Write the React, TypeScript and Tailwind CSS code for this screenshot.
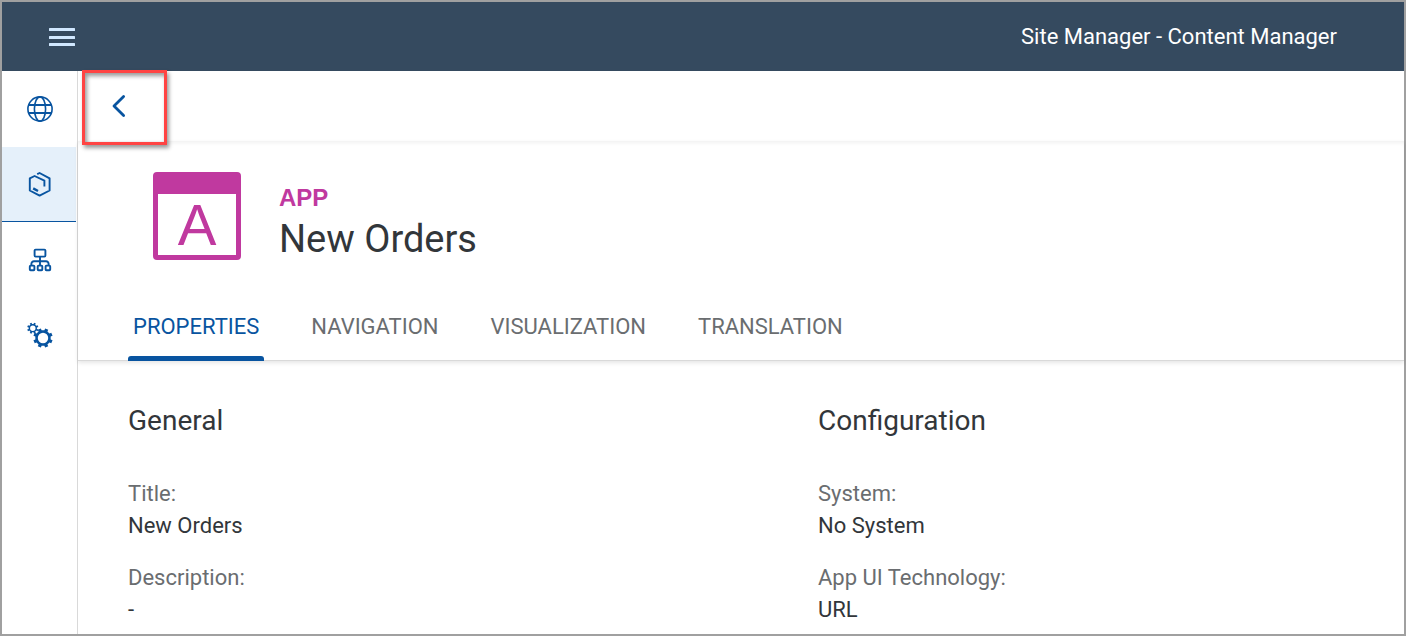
import React from "react";

const gearPath = (cx: number, cy: number, outer: number, inner: number, teeth: number) => {
  const step = (Math.PI * 2) / teeth;
  const at = (r: number, a: number) =>
    `${(cx + r * Math.cos(a)).toFixed(2)} ${(cy + r * Math.sin(a)).toFixed(2)}`;
  const parts: string[] = [];
  for (let i = 0; i < teeth; i++) {
    const a = i * step + step / 2;
    parts.push(at(inner, a - step * 0.27), at(outer, a - step * 0.22), at(outer, a + step * 0.22), at(inner, a + step * 0.27));
  }
  return `M${parts.join("L")}Z`;
};

const ring = (cx: number, cy: number, r: number) =>
  `M${cx - r} ${cy}a${r} ${r} 0 1 0 ${2 * r} 0a${r} ${r} 0 1 0 ${-2 * r} 0Z`;

function GlobeIcon() {
  return (
    <svg className="size-7" viewBox="0 0 28 28" fill="none" stroke="currentColor" strokeWidth="1.6" aria-hidden="true">
      <circle cx="14" cy="14" r="12.1" />
      <ellipse cx="14" cy="14" rx="5.6" ry="12.1" />
      <path d="M2.6 10h22.8M2.6 18h22.8" strokeWidth="2" />
    </svg>
  );
}

function ContentIcon() {
  return (
    <svg className="size-7" viewBox="0 0 28 28" fill="none" stroke="currentColor" strokeWidth="1.9" aria-hidden="true">
      <path d="M11.2 4.2 13.6 3l10 5.3v12.2l-10 5.1L3.8 20.500V8.300l4.800-2.300 9.800 4.600v6" strokeLinejoin="round" />
      <path d="m7.200 18.400 4.800 2.600" strokeWidth="2.4" />
    </svg>
  );
}

function HierarchyIcon() {
  return (
    <svg className="size-7" viewBox="0 0 28 28" fill="none" stroke="currentColor" strokeWidth="1.9" aria-hidden="true">
      <rect x="8.6" y="3.6" width="10.8" height="7" rx="1" />
      <path d="M14 10.6V19M5.4 19v-1.2a2.6 2.6 0 0 1 2.6-2.6h12a2.6 2.6 0 0 1 2.6 2.6V19" />
      <rect x="3.8" y="19.6" width="4.6" height="4.6" rx="0.8" />
      <rect x="11.7" y="19.6" width="4.6" height="4.6" rx="0.8" />
      <rect x="19.6" y="19.6" width="4.6" height="4.6" rx="0.8" />
    </svg>
  );
}

function SettingsIcon() {
  return (
    <svg className="size-7" viewBox="0 0 28 28" fill="currentColor" fillRule="evenodd" aria-hidden="true">
      <path d={gearPath(6.8, 6.2, 5.7, 4.2, 8) + ring(6.8, 6.2, 2.7)} />
      <path d={gearPath(17, 16, 9.8, 7.8, 8) + ring(17, 16, 5.2)} />
    </svg>
  );
}

const navItems = [
  { label: "Site Directory", icon: <GlobeIcon />, active: false },
  { label: "Content Manager", icon: <ContentIcon />, active: true },
  { label: "Provider Manager", icon: <HierarchyIcon />, active: false },
  { label: "Settings", icon: <SettingsIcon />, active: false },
];

const tabs = ["PROPERTIES", "NAVIGATION", "VISUALIZATION", "TRANSLATION"];

const sections = [
  {
    title: "General",
    fields: [
      { label: "Title:", value: "New Orders" },
      { label: "Description:", value: "-" },
    ],
  },
  {
    title: "Configuration",
    fields: [
      { label: "System:", value: "No System" },
      { label: "App UI Technology:", value: "URL" },
    ],
  },
];

export default function App() {
  return (
    <div className="flex min-h-screen flex-col border-2 border-[#a0a0a0] bg-white font-['Roboto',sans-serif] text-[#32363a]">
      <header className="flex h-[69px] shrink-0 items-center justify-between bg-[#354a5f] pr-[67px] pl-[47px] text-white">
        <button type="button" aria-label="Menu" className="text-[#d1e8ff]">
          <svg className="h-[18px] w-[26px]" viewBox="0 0 26 18" fill="currentColor" aria-hidden="true">
            <rect width="26" height="3" y="0" rx="0.5" />
            <rect width="26" height="3" y="8" rx="0.5" />
            <rect width="26" height="3" y="15" rx="0.5" />
          </svg>
        </button>
        <h1 className="text-[22px] leading-7">Site Manager - Content Manager</h1>
      </header>

      <div className="flex grow">
        <nav className="w-[76px] shrink-0 border-r border-[#d9d9d9] text-[#0854a0]">
          <ul className="flex flex-col">
            {navItems.map((item) => (
              <li key={item.label}>
                <a
                  href="#"
                  aria-label={item.label}
                  className={
                    item.active
                      ? "mr-px flex h-[75px] items-center justify-center border-b border-[#0854a0] bg-[#e5f0fa] pl-0.5"
                      : "mr-px flex h-[76px] items-center justify-center pl-0.5"
                  }
                >
                  {item.icon}
                </a>
              </li>
            ))}
          </ul>
        </nav>

        <main className="min-w-0 grow">
          <div className="relative flex h-[70px] items-center pl-8">
            <button type="button" aria-label="Back" className="text-[#0854a0]">
              <svg className="h-6 w-4" viewBox="0 0 16 24" fill="none" stroke="currentColor" strokeWidth="2.8" strokeLinecap="round" strokeLinejoin="round" aria-hidden="true">
                <path d="M13.6 2.5 4 12l9.6 9.5" />
              </svg>
            </button>
            <div className="pointer-events-none absolute -top-px left-1 h-[75px] w-[85px] border-3 border-[#ff4443] shadow-[2px_3px_4px_rgba(0,0,0,0.4),inset_2px_3px_4px_rgba(0,0,0,0.4)]" />
          </div>

          <section className="border-b border-[#d9d9d9] pl-[50px] shadow-[inset_0_4px_4px_-2px_rgba(0,0,0,0.06),0_2px_4px_rgba(0,0,0,0.1)]">
            <div className="flex items-end gap-[38px] pt-[31px] pl-[25px]">
              <div className="flex size-[88px] shrink-0 items-center justify-center rounded-[4px] border-x-[5px] border-t-[22px] border-b-[5px] border-[#c0399f] font-['Liberation_Sans',sans-serif] text-[58px] leading-none text-[#c0399f]">
                A
              </div>
              <div>
                <p className="font-['Liberation_Sans',sans-serif] text-2xl leading-10 font-bold text-[#c0399f]">APP</p>
                <h2 className="text-[38px] leading-[42px]">New Orders</h2>
              </div>
            </div>
            <div role="tablist" className="mt-8 flex gap-[42px]">
              {tabs.map((tab, i) => (
                <button
                  key={tab}
                  type="button"
                  role="tab"
                  aria-selected={i === 0}
                  className={
                    i === 0
                      ? "relative h-[68px] px-[5px] text-[22px] text-[#0854a0] after:absolute after:inset-x-0 after:-bottom-px after:h-[5px] after:rounded-t-[3px] after:bg-[#0854a0]"
                      : "h-[68px] px-[5px] text-[22px] text-[#6a6d70]"
                  }
                >
                  {tab}
                </button>
              ))}
            </div>
          </section>

          <div className="grid grid-cols-[690fr_586fr] pt-10 pl-[50px]">
            {sections.map((section) => (
              <section key={section.title}>
                <h3 className="text-[28px] leading-10">{section.title}</h3>
                <dl className="mt-[37px] flex flex-col gap-5">
                  {section.fields.map((field) => (
                    <div key={field.label} className="text-[22px] leading-8">
                      <dt className="text-[#6a6d70]">{field.label}</dt>
                      <dd>{field.value}</dd>
                    </div>
                  ))}
                </dl>
              </section>
            ))}
          </div>
        </main>
      </div>
    </div>
  );
}
